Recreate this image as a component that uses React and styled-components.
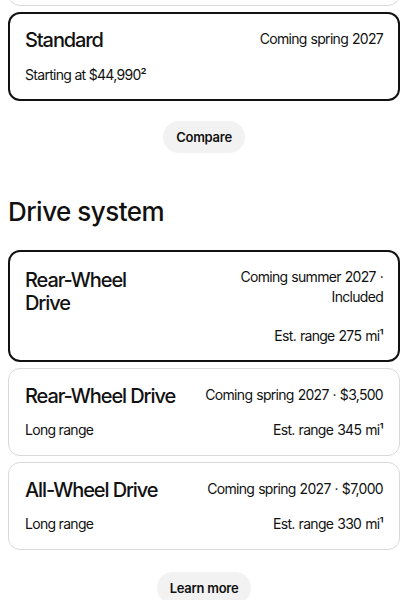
import React from 'react'
import styled, { createGlobalStyle } from 'styled-components'

const GlobalStyle = createGlobalStyle`
body {
    margin: 0;
    background: #ffffff;
    color: #111111;
    font-family: Inter, "Noto Sans", "Liberation Sans", sans-serif;
    -webkit-font-smoothing: antialiased;
}
`

const Page = styled.div`
width: 392px;
margin-left: 8px;
display: flex;
flex-direction: column;
overflow: hidden;
`

const CardList = styled.div`
display: flex;
flex-direction: column;
gap: ${({ gap }) => gap}px;
margin-top: ${({ offset }) => offset || 0}px;
`

const Card = styled.div`
box-sizing: border-box;
border: ${({ selected }) => selected ? '2px solid #111111' : '1px solid #d9d9d9'};
border-radius: 12px;
padding: ${({ selected }) => selected ? '15px 15px 14px' : '16px 16px 15px'};
min-height: ${({ minHeight }) => minHeight || 0}px;
display: flex;
flex-direction: column;
gap: ${({ rowGap }) => rowGap || 10}px;
background: #ffffff;
`

const CardRow = styled.div`
display: flex;
justify-content: space-between;
align-items: flex-start;
gap: 16px;
margin-top: ${({ push }) => push ? 'auto' : '0'};
`

const CardTitle = styled.div`
font-size: 20px;
line-height: 23px;
font-weight: 500;
letter-spacing: -0.055em;
padding-top: ${({ wrapped }) => wrapped ? 2 : 0}px;
`

const CardMeta = styled.div`
font-size: 14px;
line-height: 20px;
letter-spacing: -0.05em;
word-spacing: 0.05em;
text-align: right;
`

const CardText = styled.div`
font-size: 14px;
line-height: 20px;
letter-spacing: -0.05em;
`

const PillButton = styled.button`
align-self: center;
border: none;
background: #f2f2f2;
border-radius: 999px;
padding: 0 13px;
height: 32px;
font-family: inherit;
font-size: 13px;
font-weight: 600;
letter-spacing: -0.02em;
color: #111111;
margin-top: ${({ top }) => top}px;
cursor: pointer;
`

const SectionTitle = styled.h2`
margin: 42px 0 21px;
font-size: 26px;
line-height: 34px;
font-weight: 500;
letter-spacing: -0.02em;
`

const trims = [
    { title: 'Standard', meta: 'Coming spring 2027', text: 'Starting at $44,990²', selected: true },
]

const drives = [
    { title: 'Rear-Wheel Drive', meta: 'Coming summer 2027 · Included', left: '', right: 'Est. range 275 mi¹', selected: true },
    { title: 'Rear-Wheel Drive', meta: 'Coming spring 2027 · $3,500', left: 'Long range', right: 'Est. range 345 mi¹' },
    { title: 'All-Wheel Drive', meta: 'Coming spring 2027 · $7,000', left: 'Long range', right: 'Est. range 330 mi¹' },
]

export default function App() {
    return (
        <>
            <GlobalStyle />
            <Page>
                <CardList gap={6} offset={-80}>
                    <Card minHeight={86} />
                    {trims.map((item, index) => (
                        <Card key={index} selected={item.selected} rowGap={13}>
                            <CardRow>
                                <CardTitle>{item.title}</CardTitle>
                                <CardMeta>{item.meta}</CardMeta>
                            </CardRow>
                            <CardText>{item.text}</CardText>
                        </Card>
                    ))}
                </CardList>

                <PillButton top={20}>Compare</PillButton>

                <SectionTitle>Drive system</SectionTitle>

                <CardList gap={6}>
                    {drives.map((item, index) => (
                        <Card key={index} selected={item.selected} minHeight={item.selected ? 112 : 88}>
                            <CardRow>
                                <CardTitle wrapped={item.selected}>{item.title}</CardTitle>
                                <CardMeta>{item.meta}</CardMeta>
                            </CardRow>
                            <CardRow push>
                                <CardText>{item.left}</CardText>
                                <CardMeta>{item.right}</CardMeta>
                            </CardRow>
                        </Card>
                    ))}
                </CardList>

                <PillButton top={22}>Learn more</PillButton>
            </Page>
        </>
    )
}
